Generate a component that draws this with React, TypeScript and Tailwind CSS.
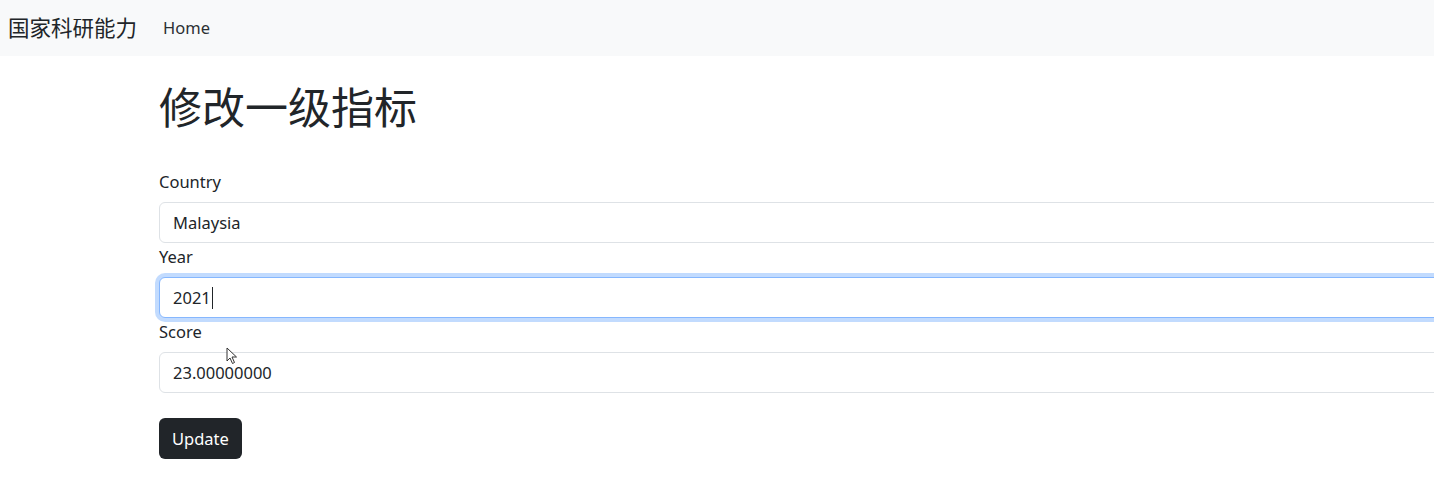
import type { ReactNode } from 'react';

const font = { fontFamily: '"Noto Sans", "Noto Sans CJK SC", sans-serif' };

function Field({ label, value, focused, children }: { label: string; value: string; focused?: boolean; children?: ReactNode }) {
    return (
        <div>
            <label className="mb-[8px] block h-[26px] pt-[1px] text-[16.5px] leading-[26px] text-[#212529]">{label}</label>
            <div
                className={
                    focused
                        ? 'relative flex h-[41px] items-center rounded-[6px] border border-[#86b7fe] bg-white px-[13px] pt-[1px] text-[16.5px] text-[#212529] shadow-[0_0_0_4px_rgba(13,110,253,0.25)]'
                        : 'relative flex h-[41px] items-center rounded-[6px] border border-[#dee2e6] bg-white px-[13px] pt-[1px] text-[16.5px] text-[#212529]'
                }
            >
                <span>{value}</span>
                {children}
            </div>
        </div>
    );
}

export default function App() {
    return (
        <div className="min-h-[482px] w-full overflow-hidden bg-white" style={font}>
            <nav className="flex h-[56px] items-center bg-[#f8f9fa] pl-[8px]">
                <span className="text-[21.5px] text-[#212529]">国家科研能力</span>
                <span className="ml-[26px] text-[16.5px] text-[#2b2f33]">Home</span>
            </nav>

            <main className="ml-[147px] w-[1320px] px-[12px]">
                <h1 className="mt-[24px] mb-[32px] text-[43px] leading-[56px] font-normal text-[#212529]">修改一级指标</h1>

                <form className="flex flex-col" onSubmit={(e) => e.preventDefault()}>
                    <Field label="Country" value="Malaysia" />
                    <Field label="Year" value="2021" focused>
                        <span className="ml-[1px] h-[22px] w-[1px] bg-[#212529]" />
                    </Field>
                    <Field label="Score" value="23.00000000" />
                    <div className="mt-[25px]">
                        <button
                            type="submit"
                            className="h-[41px] rounded-[6px] bg-[#212529] px-[13px] pt-[1px] text-[16.5px] text-white"
                        >
                            Update
                        </button>
                    </div>
                </form>
            </main>

            {/* mouse pointer */}
            <svg className="absolute top-[347px] left-[226px]" width="12" height="18" viewBox="0 0 12 18">
                <path d="M1 1 L1 14 L4 11 L6.5 16.5 L8.5 15.5 L6 10 L10.5 10 Z" fill="white" stroke="#333" strokeWidth="1" />
            </svg>
        </div>
    );
}
